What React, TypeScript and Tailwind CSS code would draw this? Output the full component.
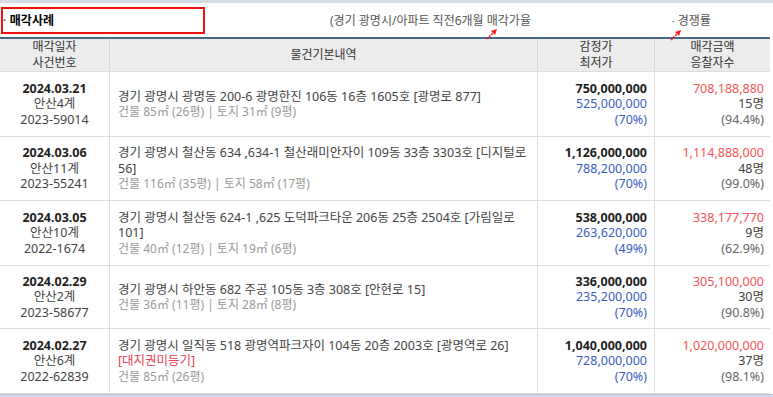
import React from "react";

type typeSale = {
  date: string;
  court: string;
  caseNo: string;
  address: string[];
  warning?: string;
  area: string;
  appraisal: string;
  minimum: string;
  minRate: string;
  salePrice: string;
  bidders: string;
  saleRate: string;
  height: string;
};

const sales: typeSale[] = [
  {
    date: "2024.03.21",
    court: "안산4계",
    caseNo: "2023-59014",
    address: ["경기 광명시 광명동 200-6 광명한진 106동 16층 1605호 [광명로 877]"],
    area: "건물 85㎡ (26평) | 토지 31㎡ (9평)",
    appraisal: "750,000,000",
    minimum: "525,000,000",
    minRate: "(70%)",
    salePrice: "708,188,880",
    bidders: "15명",
    saleRate: "(94.4%)",
    height: "h-[65px]",
  },
  {
    date: "2024.03.06",
    court: "안산11계",
    caseNo: "2023-55241",
    address: ["경기 광명시 철산동 634 ,634-1 철산래미안자이 109동 33층 3303호 [디지털로", "56]"],
    area: "건물 116㎡ (35평) | 토지 58㎡ (17평)",
    appraisal: "1,126,000,000",
    minimum: "788,200,000",
    minRate: "(70%)",
    salePrice: "1,114,888,000",
    bidders: "48명",
    saleRate: "(99.0%)",
    height: "h-[64px]",
  },
  {
    date: "2024.03.05",
    court: "안산10계",
    caseNo: "2022-1674",
    address: ["경기 광명시 철산동 624-1 ,625 도덕파크타운 206동 25층 2504호 [가림일로", "101]"],
    area: "건물 40㎡ (12평) | 토지 19㎡ (6평)",
    appraisal: "538,000,000",
    minimum: "263,620,000",
    minRate: "(49%)",
    salePrice: "338,177,770",
    bidders: "9명",
    saleRate: "(62.9%)",
    height: "h-[65px]",
  },
  {
    date: "2024.02.29",
    court: "안산2계",
    caseNo: "2023-58677",
    address: ["경기 광명시 하안동 682 주공 105동 3층 308호 [안현로 15]"],
    area: "건물 36㎡ (11평) | 토지 28㎡ (8평)",
    appraisal: "336,000,000",
    minimum: "235,200,000",
    minRate: "(70%)",
    salePrice: "305,100,000",
    bidders: "30명",
    saleRate: "(90.8%)",
    height: "h-[63px]",
  },
  {
    date: "2024.02.27",
    court: "안산6계",
    caseNo: "2022-62839",
    address: ["경기 광명시 일직동 518 광명역파크자이 104동 20층 2003호 [광명역로 26]"],
    warning: "[대지권미등기]",
    area: "건물 85㎡ (26평)",
    appraisal: "1,040,000,000",
    minimum: "728,000,000",
    minRate: "(70%)",
    salePrice: "1,020,000,000",
    bidders: "37명",
    saleRate: "(98.1%)",
    height: "h-[65px]",
  },
];

const RedArrow: React.FC<{className: string}> = ({className}) => (
  <svg className={className} height="12" viewBox="0 0 12 12" width="12">
    <path d="M1 11 L8 4" stroke="#ff1a1a" strokeDasharray="2 1" strokeWidth="1.6" />
    <path d="M11 1 L5 3 L9 7 Z" fill="#ff1a1a" />
  </svg>
);

const App: React.FC = () => {
  return (
    <div className="relative h-[397px] w-[773px] overflow-hidden bg-white font-['Noto_Sans','Noto_Sans_CJK_KR',sans-serif] text-[12px] text-[#333]">
      <div className="h-[3px] bg-[#d6dce6]" />
      <div className="flex h-[34px] items-center pt-[1px]">
        <div className="ml-[1px] flex h-[27px] w-[204px] items-center border-2 border-[#ee1111] text-[12px] font-bold text-black">
          <span className="mr-[4px] text-[10px] text-[#555]">·</span>매각사례
        </div>
        <div className="ml-[125px] text-[12px] text-[#555]">(경기 광명시/아파트 직전6개월 매각가율</div>
        <div className="ml-[141px] text-[12px] text-[#555]">
          <span className="mr-[3px] text-[10px]">·</span>경쟁률
        </div>
      </div>
      <RedArrow className="absolute left-[486px] top-[28px]" />
      <RedArrow className="absolute left-[670px] top-[29px]" />

      <div className="w-[770px] border-t-2 border-[#4a6688]">
        <div className="grid h-[33px] grid-cols-[110px_428px_117px_115px] border-b border-[#dcdcdc] bg-[#ececec] leading-[16px] text-[#333]">
          <div className="flex flex-col items-center justify-center border-r border-[#d6d6d6]">
            <span>매각일자</span>
            <span>사건번호</span>
          </div>
          <div className="flex items-center justify-center border-r border-[#d6d6d6]">물건기본내역</div>
          <div className="flex flex-col items-center justify-center border-r border-[#d6d6d6]">
            <span>감정가</span>
            <span>최저가</span>
          </div>
          <div className="flex flex-col items-center justify-center">
            <span>매각금액</span>
            <span>응찰자수</span>
          </div>
        </div>
        {sales.map((item, index) => (
          <div
            key={index}
            className={`grid ${item.height} grid-cols-[110px_428px_117px_115px] border-b border-[#dcdcdc] text-[12.5px] leading-[15.5px]`}
          >
            <div className="flex flex-col items-center justify-center border-r border-[#dcdcdc] text-[#444]">
              <span className="font-bold text-[#222]">{item.date}</span>
              <span>{item.court}</span>
              <span>{item.caseNo}</span>
            </div>
            <div className="flex flex-col justify-center border-r border-[#dcdcdc] pl-[8px] text-[#444]">
              {item.address.map((line, i) => (
                <span key={i}>{line}</span>
              ))}
              {item.warning && <span className="text-[#e8404f]">{item.warning}</span>}
              <span className="text-[12px] text-[#9a9a9a]">{item.area}</span>
            </div>
            <div className="flex flex-col items-end justify-center border-r border-[#dcdcdc] pr-[7px]">
              <span className="font-bold text-[#222]">{item.appraisal}</span>
              <span className="text-[#3b5cc6]">{item.minimum}</span>
              <span className="text-[#3b5cc6]">{item.minRate}</span>
            </div>
            <div className="flex flex-col items-end justify-center pr-[6px]">
              <span className="text-[#f25555]">{item.salePrice}</span>
              <span className="text-[#444]">{item.bidders}</span>
              <span className="text-[#666]">{item.saleRate}</span>
            </div>
          </div>
        ))}
      </div>
      <div className="h-[6px] border-t border-[#b8c4d4] bg-[#d3dbe6]" />
    </div>
  );
};

export default App;
